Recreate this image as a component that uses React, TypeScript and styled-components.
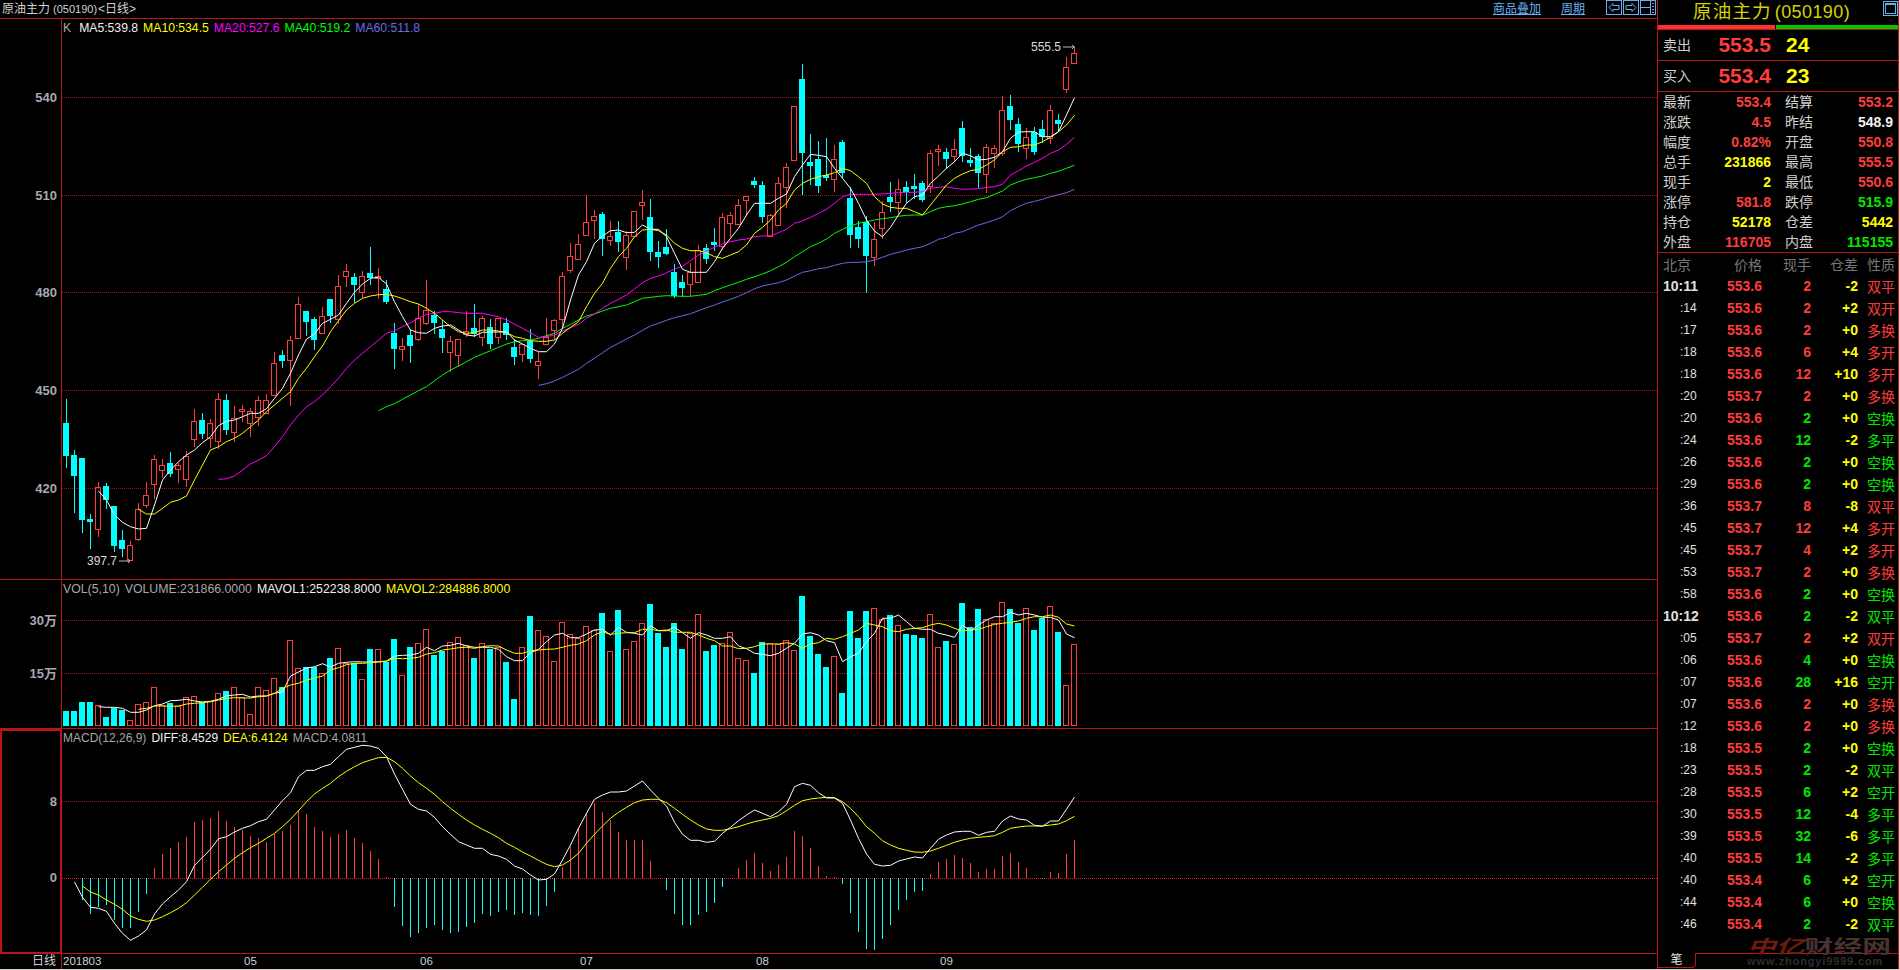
import React from "react";
import styled, { createGlobalStyle } from "styled-components";

const RED = "#ff3c3c";
const CYAN = "#00ffff";
const LINE = "#b81616";
const NUM_FONT = `"Liberation Sans", "Noto Sans CJK SC", sans-serif`;

/* ---------- chart data (pixel y of each trading day) ---------- */
type Candle = [0 | 1, number, number, number, number]; // 1 = up (hollow red), 0 = down (cyan)

const y55 = (v: number) => 55 + v / 3;
const y260 = (v: number) => 260 + v / 3;
const y140 = (v: number) => 140 + v / 3;
const y30 = (v: number) => 30 + v / 3;
const y570 = (v: number) => 570 + v / 3;

const candlesLate: Candle[] = ([
  [1,337,395,325,460],[1,154,314,154,316],[0,72,294,27,420],[0,321,333,238,390],[0,312,393,258,414],
  [0,360,369,250,378],[1,313,371,270,412],[0,262,353,255,370],[0,429,540,396,579],[0,516,552,498,579],
  [0,501,603,483,714],[1,552,606,501,633],[1,472,518,438,552],[0,427,441,381,470],[1,403,440,372,476],
  [0,396,412,378,444],[0,393,402,357,432],[0,384,434,378,441],[1,295,392,285,414],[1,283,289,270,333],
  [0,292,312,279,342],[1,283,302,252,320],[0,219,303,198,320],[0,316,324,279,336],[0,304,353,298,400],
  [1,277,356,268,414],[1,280,293,271,338],
] as Candle[]).map(([k, a, b, c, d]) => [k, y55(a), y55(b), y55(c), y55(d)] as Candle);

const candles: Candle[] = [
  [0,423,456,399,468],[0,455,476,450,513],[0,458,520,458,533],[0,519,522,514,549],[1,487,529,482,537],
  [0,486,500,483,509],[0,506,546,506,552],[0,540,549,530,557],[1,545,560,541,560],[1,509,539,503,541],
  [1,495,505,482,508],[1,459,484,455,499],[1,465,470,459,478],[0,463,474,452,477],[1,465,469,463,483],
  [1,456,479,451,487],[1,421,439,409,447],[0,420,434,413,439],[1,423,438,419,448],[1,399,441,393,449],
  [0,400,430,394,435],[1,418,432,406,442],[1,409,411,405,422],[1,411,423,408,437],[1,400,417,396,426],
  [1,400,413,394,414],[1,363,395,352,396],[0,355,361,350,368],[1,340,360,336,406],[1,304,338,297,339],
  [0,311,322,311,336],[0,319,340,317,350],[1,316,333,307,334],[0,299,316,299,323],[1,286,319,275,324],
  [1,271,276,264,287],[0,277,285,273,303],[1,276,292,271,298],[0,273,278,247,285],[1,276,278,268,299],
  [0,289,302,280,304],[0,333,349,323,369],[1,346,349,338,361],[0,335,346,330,363],[1,318,339,304,341],
  [1,310,323,280,325],[0,315,323,311,334],[0,329,338,320,353],[1,341,352,336,372],[1,339,355,339,367],
  [1,331,334,311,337],[0,328,334,304,337],[1,318,337,316,346],[0,327,344,319,349],[1,318,337,318,344],
  [0,323,335,318,340],[0,347,357,339,365],[1,344,354,344,362],[0,341,359,329,363],[1,361,365,352,379],
  [1,337,344,318,344],[1,320,330,319,340],[1,276,319,272,328],[1,256,270,243,273],[1,244,259,234,259],
  [1,222,235,195,236],[1,216,220,210,239],[0,214,239,212,256],[1,236,240,221,246],[0,232,242,221,252],
  [1,235,257,231,270],[1,211,236,211,236],[1,202,205,190,220],[0,217,252,199,261],[0,252,257,241,268],
  [0,247,254,229,255],[0,272,296,264,298],[0,282,288,275,297],[1,272,284,263,296],[1,250,282,245,282],
  [0,248,259,244,264],[0,242,245,228,251],[1,217,246,213,250],[1,215,223,212,237],[1,205,224,199,224],
  [1,196,200,196,216],[0,181,185,177,188],[0,185,217,181,223],[1,215,236,214,237],[1,183,225,177,225],
  ...candlesLate,
  [1,110,153,96,156],[0,106,120,95,130],[0,124,144,118,152],[1,137,148,128,159],[0,132,152,127,155],
  [0,129,137,120,143],[1,110,138,105,144],[0,120,124,114,132],[1,67,89,57,93],[1,53,63,46,63],
];

interface Series { color: string; start: number; ys: number[] }

const ma5: Series = { color: "#ffffff", start: 4, ys: [
  ...[693,720,765,787,800,807,805,735,660,630,605,585,570,548,530,497,484,480,470,460,460,446,415,385,340,285,237,222,190,178,165,130,97,72,55,52,72,125,170,210,218,220,205,198,195,210,225,228,217,216,216].map(y260),
  ...[575,600,612,625,635,635,612,565,480,405,365,310,288,272,270,278,277,255,268,268,290,340,388,397,397,397,365,325,295,265,225,190,190,190,175,162,110,75,43,46,50,85,115,145,190,240,273,290,262,225,190,170,165,130,108,85,65,40,47,60,58,52,35].map(y140),
  ...[325,306,305,305,320,320,305,255,203].map(y30),
] };
const ma10: Series = { color: "#ffff00", start: 9, ys: [
  ...[748,762,762,745,727,720,708,660,615,570,560,545,535,520,500,480,455,435,415,395,355,325,290,258,215,182,150,130,115,108,104,103,108,116,125,132,145,160,180,200,215,220,218,210,210,213].map(y260),
  ...[578,590,595,602,604,604,600,580,562,545,500,460,430,385,350,325,290,270,268,272,285,310,325,332,332,338,350,355,345,335,315,280,262,240,210,190,150,130,118,110,105,98,85,92,110,130,170,192,202,205,205,215,225,195,165,135,115,102,92,88,75,60,35].map(y140),
  ...[352,350,345,345,335,322,305,285,256].map(y30),
] };
const ma20: Series = { color: "#ff00ff", start: 19, ys: [
  ...[658,656,648,630,612,600,587,560,530,495,465,440,425,405,380,355,325,300,280,260,240,220,212,200,188,175,163,160,155,155,158,160,160,160,165,170].map(y260),
  ...[540,553,565,578,592,590,585,573,563,553,535,522,505,490,478,465,447,428,415,408,398,388,378,362,345,333,322,312,305,300,297,290,288,287,278,268,250,243,232,220,208,190,170,163,163,163,163,162,160,158,157,157,155,145,142,140,145,148,147,146,142,140,133].map(y140),
  ...[435,422,408,397,385,370,360,343,322].map(y30),
] };
const ma40: Series = { color: "#00ff00", start: 39, ys: [
  ...[452,440,431,418,405,392,380,362,345,330,318,305,292,282,272,262].map(y260),
  ...[612,605,602,600,595,587,580,565,553,540,528,522,513,505,500,495,485,475,472,469,467,468,469,469,466,463,452,443,435,427,418,410,402,392,380,367,350,335,320,310,297,280,268,258,250,245,240,236,233,229,226,225,225,215,205,200,197,192,185,178,173,163,153].map(y140),
  ...[465,455,448,443,438,430,424,415,406].map(y30),
] };
const ma60: Series = { color: "#6a6ce0", start: 59, ys: [
  ...[736,731,723,712,700,688,670,655,638,622,610,597,585,571,558,550,541,533,527,521,512,503,495,486,478,469,458,446,438,433,428,420,408,397,392,386,383,376,370,367,367,365,360,352,343,337,330,325,320,310,298,292,280,275,265,255,248,240,230].map(y140),
  ...[542,530,520,514,508,500,494,488,478].map(y30),
] };

// [up?, top of the bar]; every bar stands on y = 725
const volumes: [0 | 1, number][] = ([
  [0,423],[0,423],[0,396],[0,396],[1,406],[0,441],[0,413],[0,420],[1,451],[1,403],[1,397],[1,352],[1,405],[0,399],[1,409],[1,382],[1,379],[0,397],[1,394],[1,370],[0,363],[1,352],[1,382],[1,433],[1,352],[1,361],[1,325],[0,351],[1,211],[1,295],[0,292],[0,290],[1,310],[0,264],[1,235],[1,280],[0,280],[1,328],[0,237],[1,238],[0,275],[0,207],[1,316],[0,231],[1,220],[1,178],[0,255],[0,243],[1,217],[1,202],[1,226],[0,264],[1,220],[0,237],[1,232],
  [0,276],[0,387],[1,232],[0,138],[1,181],[1,199],[1,274],[1,157],[1,193],[1,204],[1,169],[1,180],[0,129],[1,244],[0,120],[1,238],[1,214],[1,160],[0,102],[0,189],[0,231],[0,159],[0,237],[1,190],[1,133],[0,243],[0,225],[1,220],[1,187],[1,265],[1,271],[0,309],[0,216],[1,220],[1,223],[1,211],[1,241],[0,78],[0,198],[0,252],[0,291],[1,259],[0,369],[0,123],[0,204],[0,123],[1,115],[1,148],[0,135],[1,166],[0,192],[0,195],[0,204],[1,133],[1,232],[0,213],[1,223],[0,99],[0,171],[0,117],[1,148],[1,160],[1,97],[0,117],[0,159],[1,115],[0,180],[0,144],[1,109],[0,186],[1,346],[1,223],
] as [0 | 1, number][]).map(([k, v]) => [k, y570(v)]);

const mavol1: Series = { color: "#ffffff", start: 4, ys: [410,412,412,415,427,427,420,407,402,392,391,388,393,396,394,388,377,375,373,381,378,378,370,365,318,306,294,290,281,291,280,277,275,276,276,275,273,258,256,255,250,232,242,228,226,220,228,232,232,232,238,260,272,272,248,238,215,195,190,203,203,192,180,178,195,172,187,190,195,167,182,182,172,188,205,188,195,205,205,200,228,236,250,253,257,250,235,220,192,188,195,212,218,275,260,250,215,190,145,145,135,155,175,178,178,190,195,202,165,183,165,150,140,140,127,135,130,135,142,142,150,192,203].map(y570) };
const mavol2: Series = { color: "#ffff00", start: 9, ys: [418,415,408,408,409,408,402,400,398,395,390,385,383,384,384,380,378,370,355,345,340,330,324,318,300,293,284,280,280,278,276,274,265,266,265,262,252,248,240,237,233,232,235,230,227,228,240,250,250,242,240,238,237,232,226,222,212,195,185,193,190,188,188,178,178,182,180,187,187,187,195,205,212,228,228,236,235,230,222,222,222,218,222,235,222,218,205,208,200,190,180,160,165,170,182,185,178,175,173,165,160,165,175,183,180,178,170,163,160,157,153,145,140,140,135,142,162,168].map(y570) };

// value at every day from day 2 on; 925 in the crop is the zero line
const macdBars: number[] = [
  990,1031,1012,1005,1050,1074,1074,1026,972,895,852,834,816,801,756,750,744,723,753,771,780,798,804,816,792,783,765,720,732,771,783,801,792,780,804,819,843,867,922,1011,1068,1101,1089,1074,1065,1080,1089,1086,1071,1059,1032,1038,1026,
  1020,1035,1029,1035,1038,1008,966,890,830,775,730,700,726,750,786,810,810,810,873,925,960,1032,1065,1065,1035,1026,999,951,925,894,870,849,879,903,885,861,783,798,834,888,918,921,942,1029,1086,1137,1140,1107,1065,1020,990,966,963,912,876,867,855,864,879,906,897,897,858,849,876,894,925,927,906,909,852,810,
];
const diff: Series = { color: "#ffffff", start: 1, ys: [936,982,1012,1015,1024,1060,1090,1111,1098,1080,1032,1002,980,960,935,886,862,838,806,800,786,775,767,755,748,720,692,668,620,601,601,590,583,560,538,532,526,528,535,560,612,658,703,718,723,742,770,793,815,825,835,835,853,858,868,888,897,915,930,928,912,870,825,775,730,688,675,666,666,663,648,633,660,685,708,757,793,811,811,817,814,790,772,752,735,720,730,740,725,703,650,640,646,668,684,684,700,750,805,852,883,888,886,873,867,861,864,835,808,795,786,784,784,796,787,784,753,738,747,750,766,769,753,753,718,681].map(y570) };
const dea: Series = { color: "#ffff00", start: 2, ys: [948,966,975,990,1003,1018,1038,1048,1054,1050,1040,1028,1015,998,975,952,928,905,885,865,848,833,820,805,790,770,748,722,695,672,655,640,620,604,590,578,570,563,562,575,595,618,638,655,673,695,715,733,750,765,778,790,803,820,832,846,858,871,883,890,885,870,850,820,793,768,745,727,712,698,690,688,688,698,715,733,750,765,777,781,781,776,770,762,755,750,745,737,722,706,692,687,684,682,683,695,715,740,770,790,812,825,835,841,846,847,843,835,826,817,810,805,802,800,797,787,775,771,768,768,768,765,762,752,739].map(y570) };

const dayX = (i: number) => 66 + 8 * i;
const points = (s: Series) => s.ys.map((y, k) => `${dayX(s.start + k) + 0.5},${y.toFixed(1)}`).join(" ");

/* ---------- trades ---------- */
type Tone = "red" | "green" | "yellow" | "white";
interface Trade { t: string; p: string; q: string; qt: Tone; d: string; k: string; kt: Tone }
const tr = (t: string, p: string, q: string, d: string, k: string, tone: Tone): Trade => ({ t, p, q, qt: tone, d, k, kt: tone });
const trades: Trade[] = [
  tr("10:11","553.6","2","-2","双平","red"),tr(":14","553.6","2","+2","双开","red"),tr(":17","553.6","2","+0","多换","red"),
  tr(":18","553.6","6","+4","多开","red"),tr(":18","553.6","12","+10","多开","red"),tr(":20","553.7","2","+0","多换","red"),
  tr(":20","553.6","2","+0","空换","green"),tr(":24","553.6","12","-2","多平","green"),tr(":26","553.6","2","+0","空换","green"),
  tr(":29","553.6","2","+0","空换","green"),tr(":36","553.7","8","-8","双平","red"),tr(":45","553.7","12","+4","多开","red"),
  tr(":45","553.7","4","+2","多开","red"),tr(":53","553.7","2","+0","多换","red"),tr(":58","553.6","2","+0","空换","green"),
  tr("10:12","553.6","2","-2","双平","green"),tr(":05","553.7","2","+2","双开","red"),tr(":06","553.6","4","+0","空换","green"),
  tr(":07","553.6","28","+16","空开","green"),tr(":07","553.6","2","+0","多换","red"),tr(":12","553.6","2","+0","多换","red"),
  tr(":18","553.5","2","+0","空换","green"),tr(":23","553.5","2","-2","双平","green"),tr(":28","553.5","6","+2","空开","green"),
  tr(":30","553.5","12","-4","多平","green"),tr(":39","553.5","32","-6","多平","green"),tr(":40","553.5","14","-2","多平","green"),
  tr(":40","553.4","6","+2","空开","green"),tr(":44","553.4","6","+0","空换","green"),tr(":46","553.4","2","-2","双平","green"),
];

const stats: [string, string, Tone, string, string, Tone][] = [
  ["最新","553.4","red","结算","553.2","red"],
  ["涨跌","4.5","red","昨结","548.9","white"],
  ["幅度","0.82%","red","开盘","550.8","red"],
  ["总手","231866","yellow","最高","555.5","red"],
  ["现手","2","yellow","最低","550.6","red"],
  ["涨停","581.8","red","跌停","515.9","green"],
  ["持仓","52178","yellow","仓差","5442","yellow"],
  ["外盘","116705","red","内盘","115155","green"],
];

const toneColor: Record<Tone, string> = { red: RED, green: "#00e800", yellow: "#ffff00", white: "#f0f0f0" };

/* ---------- styled parts ---------- */
const Global = createGlobalStyle`
  html, body { margin: 0; padding: 0; background: #d4d0c8; overflow: hidden; }
  * { box-sizing: border-box; }
`;
const Screen = styled.div`
  display: flex; width: 1898px; height: 969px; background: #000; color: #c8c8c8;
  font-family: ${NUM_FONT}; font-size: 12px;
`;
const ChartColumn = styled.main`
  display: flex; flex-direction: column; width: 1657px; flex: none;
`;
const TopBar = styled.header`
  display: flex; align-items: center; height: 19px; border-bottom: 1px solid ${LINE}; padding: 0 1px 1px 2px; flex: none;
`;
const ChartTitle = styled.div`
  font-size: 12px; line-height: 18px; color: #d0d0d0; white-space: nowrap; flex: 1;
  small { font-size: 11px; margin: 0 1px 0 3px; }
`;
const TopLink = styled.a`
  color: #68aef0; text-decoration: underline; font-size: 12px; line-height: 16px; margin-right: 20px; &:last-of-type { margin-right: 21px; }
`;
const IconRow = styled.div`
  display: flex; gap: 1px; align-items: center; margin-bottom: 2px;
`;
const Pane = styled.section<{ $h: number }>`
  display: flex; height: ${p => p.$h}px; border-bottom: 1px solid ${LINE}; flex: none;
`;
const Axis = styled.div<{ $active?: boolean }>`
  position: relative; width: 62px; flex: none;
  border-right: 1px solid ${LINE};
  ${p => p.$active && `border: 2px solid ${LINE}; margin-bottom: -1px;`}
`;
const Tick = styled.span<{ $active?: boolean }>`
  position: absolute; right: ${p => (p.$active ? 3 : 4)}px; transform: translateY(-50%);
  font-size: 13px; font-weight: 700; color: #a8a8b0; line-height: 14px; white-space: nowrap;
`;
const Plot = styled.div`
  position: relative; flex: 1; min-width: 0;
  svg { display: block; }
`;
const Legend = styled.div<{ $size?: number }>`
  position: absolute; left: 1px; top: 0; display: flex; gap: 5px; line-height: 18px;
  font-size: ${p => p.$size ?? 12}px; white-space: nowrap;
`;
const LegendItem = styled.span<{ $c: string; $wide?: boolean }>`
  color: ${p => p.$c}; ${p => p.$wide && "margin-right: 3px;"}
`;
const DateAxis = styled.footer`
  display: flex; height: 15px; flex: none;
`;
const DateCorner = styled.div`
  width: 62px; flex: none; border-right: 1px solid ${LINE}; text-align: right; padding-right: 5px;
  font-size: 12px; line-height: 14px; color: #d0d0d0;
`;
const DateTrack = styled.div`
  position: relative; flex: 1;
`;
const DateMark = styled.span`
  position: absolute; top: 0; font-size: 11.5px; line-height: 15px; color: #d0d0d0;
`;

const Side = styled.aside`
  position: relative; display: flex; flex-direction: column; flex: 1; height: 969px;
  border-left: 1px solid ${LINE}; border-right: 1px solid ${LINE};
`;
const SideTitle = styled.div`
  position: relative; height: 25px; flex: none; padding-left: 35px; line-height: 24px;
  font-size: 18px; letter-spacing: 0.4px; color: #d4d400; white-space: nowrap;
  b { font-weight: 400; font-size: 18.5px; letter-spacing: 1.2px; margin-right: 3px; }
`;
const MaxButton = styled.span`
  position: absolute; right: 0; top: 1px; display: block; line-height: 0;
`;
const RatioBar = styled.div`
  display: flex; height: 5px; flex: none; border-bottom: 1px solid ${LINE};
`;
const RatioPart = styled.i<{ $c: string; $w: number }>`
  display: block; height: 4px; width: ${p => p.$w}px; background: ${p => p.$c}; margin-left: ${p => (p.$w > 120 ? 1 : 0)}px;
`;
const Quote = styled.div`
  display: flex; align-items: center; height: 31px; flex: none; padding-left: 5px; border-bottom: 1px solid ${LINE};
`;
const CnLabel = styled.span<{ $w?: number }>`
  font-size: 14px; line-height: 20px; color: #d0d0d0; width: ${p => p.$w ?? 40}px; flex: none;
`;
const QuotePrice = styled.strong`
  width: 68px; text-align: right; color: ${RED}; font-size: 21px; line-height: 26px; font-weight: 700;
`;
const QuoteSize = styled.strong`
  margin-left: 15px; color: #ffff00; font-size: 21px; line-height: 26px; font-weight: 700;
`;
const StatGrid = styled.div`
  display: grid; grid-template-columns: 108px 108px; column-gap: 14px; grid-auto-rows: 20px;
  padding-left: 5px; height: 161px; flex: none; border-bottom: 1px solid ${LINE};
`;
const StatCell = styled.div`
  display: flex; align-items: center; justify-content: space-between;
`;
const StatValue = styled.span<{ $t: Tone }>`
  color: ${p => toneColor[p.$t]}; font-size: 14px; font-weight: 700; line-height: 20px;
`;
const TradeList = styled.div`
  flex: 1; min-height: 0; overflow: hidden; padding-left: 5px;
`;
const TradeRow = styled.div`
  display: grid; grid-template-columns: 37px 62px 49px 47px 37px; align-items: center; height: 22px; white-space: nowrap;
`;
const HeadCell = styled.span<{ $right?: boolean; $pad?: boolean }>`
  color: #787878; font-size: 14px; text-align: ${p => (p.$right ? "right" : "left")}; ${p => p.$pad && "padding-left: 9px;"}
`;
const TimeCell = styled.span<{ $main: boolean }>`
  color: #e0e0e0; white-space: nowrap;
  ${p => (p.$main ? "font-size: 14px; font-weight: 700;" : "font-size: 12px; padding-left: 17px;")}
`;
const NumCell = styled.span<{ $t: Tone }>`
  text-align: right; color: ${p => toneColor[p.$t]}; font-size: 14px; font-weight: 700;
`;
const KindCell = styled.span<{ $t: Tone }>`
  padding-left: 9px; color: ${p => toneColor[p.$t]}; font-size: 14px;
`;
const TabBar = styled.div`
  display: flex; height: 16px; flex: none;
`;
const Tab = styled.div`
  width: 38px; height: 15px; border-bottom: 1px solid ${LINE}; border-right: 1px solid ${LINE}; border-bottom-right-radius: 4px;
  text-align: center; font-size: 12px; line-height: 15px; color: #e8e8e8;
`;
const TabRest = styled.div`
  flex: 1; border-top: 1px solid ${LINE};
`;
const Watermark = styled.div`
  position: absolute; right: 3px; bottom: 2px; width: 148px; height: 31px; pointer-events: none;
`;
const MarkName = styled.div`
  font-size: 18px; line-height: 18px; font-weight: 700; white-space: nowrap; transform: scaleX(1.6); transform-origin: left center;
  font-family: "Noto Sans CJK SC", sans-serif; color: #4a3230;
  em { font-style: italic; color: #6e1a10; }
`;
const MarkUrl = styled.div`
  margin-top: 2px; font-size: 11px; line-height: 11px; letter-spacing: 0.85px; color: #2e2e2e; white-space: nowrap; font-weight: 700;
`;

/* ---------- chart drawing ---------- */
const GridLine: React.FC<{ y: number; c?: string }> = ({ y, c = "#a01010" }) => (
  <line x1={62} x2={1657} y1={y} y2={y} stroke={c} strokeDasharray="1 1" shapeRendering="crispEdges" />
);
const Curve: React.FC<{ s: Series }> = ({ s }) => (
  <polyline points={points(s)} fill="none" stroke={s.color} strokeWidth={1} strokeLinejoin="round" />
);
const CandleMark: React.FC<{ c: Candle; i: number }> = ({ c: [up, top, bottom, high, low], i }) => {
  const x = dayX(i);
  const t = Math.round(top), b = Math.round(bottom), h = Math.round(high), l = Math.round(low);
  if (up) {
    return (
      <g shapeRendering="crispEdges">
        {t > h && <rect x={x} y={h} width={1} height={t - h} fill={RED} />}
        {l > b && <rect x={x} y={b} width={1} height={l - b} fill={RED} />}
        <rect x={x - 2.5} y={t + 0.5} width={5} height={Math.max(b - t, 1)} fill="none" stroke={RED} />
      </g>
    );
  }
  return (
    <g shapeRendering="crispEdges">
      <rect x={x} y={h} width={1} height={l - h} fill={CYAN} />
      <rect x={x - 3} y={t} width={6} height={Math.max(b - t, 2)} fill={CYAN} />
    </g>
  );
};
const PriceFlag: React.FC<{ x: number; y: number; text: string }> = ({ x, y, text }) => (
  <g>
    <text x={x} y={y + 4} fontSize={12} fill="#dcdcdc" fontFamily={NUM_FONT}>{text}</text>
    <path d={`M${x + 32} ${y + 0.5}H${x + 43}M${x + 41} ${y - 1.5}L${x + 43} ${y + 0.5}L${x + 41} ${y + 2.5}`} fill="none" stroke="#b8b8b8" />
  </g>
);

const ArrowIcon: React.FC<{ dir: "left" | "right" }> = ({ dir }) => (
  <svg width={16} height={15} viewBox="0 0 16 15">
    <rect x={0.5} y={0.5} width={15} height={14} fill="none" stroke="#68aef0" />
    <path
      d={dir === "left" ? "M3 7.5L7 3.5V5.5H13V9.5H7V11.5Z" : "M13 7.5L9 3.5V5.5H3V9.5H9V11.5Z"}
      fill="none" stroke="#68aef0"
    />
  </svg>
);
const LayoutIcon = () => (
  <svg width={16} height={15} viewBox="0 0 16 15" shapeRendering="crispEdges">
    <rect x={0.5} y={0.5} width={15} height={14} fill="none" stroke="#68aef0" />
    <path d="M10.5 1V14M1 7.5H10" stroke="#68aef0" fill="none" />
    <path d="M12 3.5H14M12 6.5H14M12 9.5H14M12 12.5H14" stroke="#68aef0" fill="none" />
  </svg>
);
const MaxIcon = () => (
  <svg width={15} height={15} viewBox="0 0 15 15" shapeRendering="crispEdges">
    <rect x={0.5} y={0.5} width={14} height={14} fill="none" stroke="#68aef0" />
    <rect x={2.5} y={2.5} width={10} height={10} fill="none" stroke="#68aef0" />
    <path d="M3 3.5H12" stroke="#68aef0" />
  </svg>
);

const priceTicks = [["540", 78.5], ["510", 176.5], ["480", 273.5], ["450", 371.5], ["420", 469.5]] as const;
const dateMarks = [["201803", 1], ["05", 182], ["06", 358], ["07", 518], ["08", 694], ["09", 878]] as const;

export default function App() {
  return (
    <>
      <Global />
      <Screen>
        <ChartColumn>
          <TopBar>
            <ChartTitle>原油主力<small>(050190)</small>&lt;日线&gt;</ChartTitle>
            <TopLink>商品叠加</TopLink>
            <TopLink>周期</TopLink>
            <IconRow>
              <ArrowIcon dir="left" />
              <ArrowIcon dir="right" />
              <LayoutIcon />
            </IconRow>
          </TopBar>

          <Pane $h={561}>
            <Axis>
              {priceTicks.map(([t, y]) => <Tick key={t} style={{ top: y }}>{t}</Tick>)}
            </Axis>
            <Plot>
              <svg width={1595} height={560} viewBox="62 19 1595 560">
                {[97.5, 195.5, 292.5, 390.5, 488.5].map(y => <GridLine key={y} y={y} />)}
                {candles.map((c, i) => <CandleMark key={i} c={c} i={i} />)}
                <Curve s={ma60} /><Curve s={ma40} /><Curve s={ma20} /><Curve s={ma10} /><Curve s={ma5} />
                <PriceFlag x={87} y={560.5} text="397.7" />
                <PriceFlag x={1031} y={46.5} text="555.5" />
              </svg>
              <Legend $size={12.2}>
                <LegendItem $c="#a8a8a8" $wide>K</LegendItem>
                <LegendItem $c="#f0f0f0">MA5:539.8</LegendItem>
                <LegendItem $c="#ffff00">MA10:534.5</LegendItem>
                <LegendItem $c="#ff00ff">MA20:527.6</LegendItem>
                <LegendItem $c="#00ff00">MA40:519.2</LegendItem>
                <LegendItem $c="#6a6ce0">MA60:511.8</LegendItem>
              </Legend>
            </Plot>
          </Pane>

          <Pane $h={149}>
            <Axis>
              <Tick style={{ top: 41 }}>30万</Tick>
              <Tick style={{ top: 94 }}>15万</Tick>
            </Axis>
            <Plot>
              <svg width={1595} height={148} viewBox="62 580 1595 148">
                <GridLine y={620.5} /><GridLine y={673.5} />
                <g shapeRendering="crispEdges">
                  {volumes.map(([up, top], i) => up
                    ? <rect key={i} x={dayX(i) - 2.5} y={Math.round(top) + 0.5} width={5} height={725 - Math.round(top)} fill="none" stroke={RED} />
                    : <rect key={i} x={dayX(i) - 3} y={Math.round(top)} width={6} height={726 - Math.round(top)} fill={CYAN} />)}
                </g>
                <Curve s={mavol1} /><Curve s={mavol2} />
              </svg>
              <Legend $size={12.3}>
                <LegendItem $c="#a8a8a8">VOL(5,10)</LegendItem>
                <LegendItem $c="#a8a8a8">VOLUME:231866.0000</LegendItem>
                <LegendItem $c="#f0f0f0">MAVOL1:252238.8000</LegendItem>
                <LegendItem $c="#ffff00">MAVOL2:284886.8000</LegendItem>
              </Legend>
            </Plot>
          </Pane>

          <Pane $h={225}>
            <Axis $active>
              <Tick $active style={{ top: 71 }}>8</Tick>
              <Tick $active style={{ top: 147 }}>0</Tick>
            </Axis>
            <Plot>
              <svg width={1595} height={224} viewBox="62 729 1595 224">
                <GridLine y={801.5} />
                <GridLine y={878.5} c="#e82020" />
                <g shapeRendering="crispEdges">
                  {macdBars.map((v, k) => {
                    const y = Math.round(y570(v));
                    const h = Math.abs(y - 878);
                    return h === 0 ? null : (
                      <rect key={k} x={dayX(k + 2)} y={Math.min(y, 878)} width={1} height={h} fill={y < 878 ? RED : CYAN} />
                    );
                  })}
                </g>
                <Curve s={dea} /><Curve s={diff} />
              </svg>
              <Legend>
                <LegendItem $c="#a8a8a8">MACD(12,26,9)</LegendItem>
                <LegendItem $c="#f0f0f0">DIFF:8.4529</LegendItem>
                <LegendItem $c="#ffff00">DEA:6.4124</LegendItem>
                <LegendItem $c="#a8a8a8">MACD:4.0811</LegendItem>
              </Legend>
            </Plot>
          </Pane>

          <DateAxis>
            <DateCorner>日线</DateCorner>
            <DateTrack>
              {dateMarks.map(([t, x]) => <DateMark key={t} style={{ left: x }}>{t}</DateMark>)}
            </DateTrack>
          </DateAxis>
        </ChartColumn>

        <Side>
          <SideTitle>
            <b>原油主力</b>(050190)
            <MaxButton><MaxIcon /></MaxButton>
          </SideTitle>
          <RatioBar>
            <RatioPart $c="#ff3030" $w={117} />
            <RatioPart $c="#00c800" $w={122} />
          </RatioBar>
          <Quote>
            <CnLabel>卖出</CnLabel>
            <QuotePrice>553.5</QuotePrice>
            <QuoteSize>24</QuoteSize>
          </Quote>
          <Quote>
            <CnLabel>买入</CnLabel>
            <QuotePrice>553.4</QuotePrice>
            <QuoteSize>23</QuoteSize>
          </Quote>
          <StatGrid>
            {stats.map(([a, av, at, b, bv, bt]) => (
              <React.Fragment key={a}>
                <StatCell><CnLabel>{a}</CnLabel><StatValue $t={at}>{av}</StatValue></StatCell>
                <StatCell><CnLabel>{b}</CnLabel><StatValue $t={bt}>{bv}</StatValue></StatCell>
              </React.Fragment>
            ))}
          </StatGrid>
          <TradeList>
            <TradeRow>
              <HeadCell>北京</HeadCell>
              <HeadCell $right>价格</HeadCell>
              <HeadCell $right>现手</HeadCell>
              <HeadCell $right>仓差</HeadCell>
              <HeadCell $pad>性质</HeadCell>
            </TradeRow>
            {trades.map((r, i) => (
              <TradeRow key={i}>
                <TimeCell $main={r.t.length > 3}>{r.t}</TimeCell>
                <NumCell $t="red">{r.p}</NumCell>
                <NumCell $t={r.qt}>{r.q}</NumCell>
                <NumCell $t="yellow">{r.d}</NumCell>
                <KindCell $t={r.kt}>{r.k}</KindCell>
              </TradeRow>
            ))}
          </TradeList>
          <TabBar>
            <Tab>笔</Tab>
            <TabRest />
          </TabBar>
          <Watermark>
            <MarkName><em>中亿</em>财经网</MarkName>
            <MarkUrl>www.zhongyi9999.com</MarkUrl>
          </Watermark>
        </Side>
      </Screen>
    </>
  );
}
